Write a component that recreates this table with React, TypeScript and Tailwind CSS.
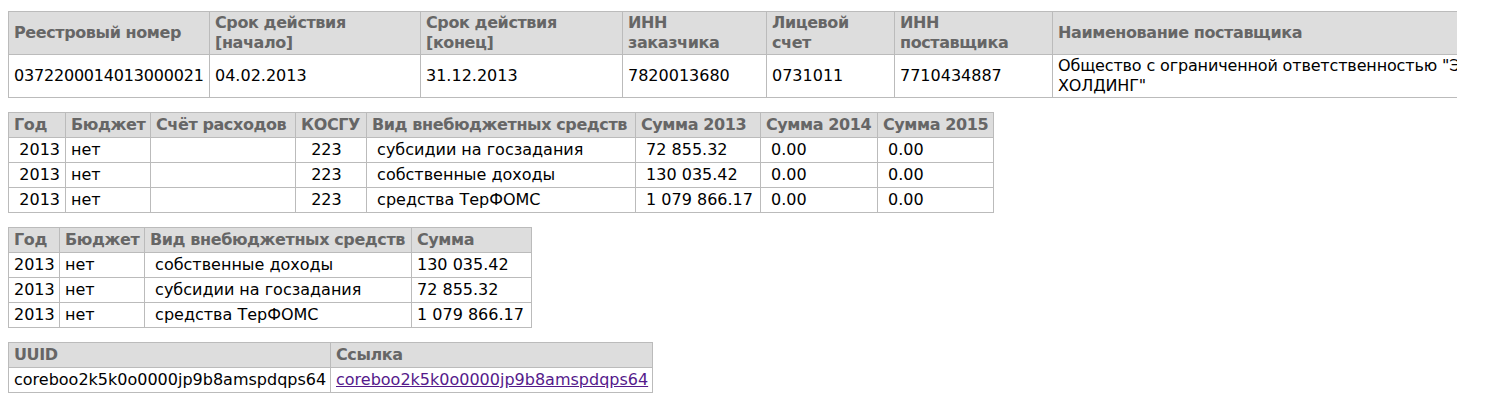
import React from 'react'

const th = 'bg-[#dddddd] text-[#666666] font-bold text-left border border-[#bbbbbb] px-[5px] align-middle tracking-[-0.4px]'
const td = 'border border-[#bbbbbb] px-[5px] align-middle text-black'

const budgetRows = [
  { year: '2013', budget: 'нет', kosgu: '223', kind: 'субсидии на госзадания', s13: '72 855.32', s14: '0.00', s15: '0.00' },
  { year: '2013', budget: 'нет', kosgu: '223', kind: 'собственные доходы', s13: '130 035.42', s14: '0.00', s15: '0.00' },
  { year: '2013', budget: 'нет', kosgu: '223', kind: 'средства ТерФОМС', s13: '1 079 866.17', s14: '0.00', s15: '0.00' },
]

const sumRows = [
  { year: '2013', budget: 'нет', kind: 'собственные доходы', sum: '130 035.42' },
  { year: '2013', budget: 'нет', kind: 'субсидии на госзадания', sum: '72 855.32' },
  { year: '2013', budget: 'нет', kind: 'средства ТерФОМС', sum: '1 079 866.17' },
]

const sp = '\u00a0'

export default function App() {
  return (
    <main
      className="pl-[8px] pt-[11px] text-[16px] leading-[20px] bg-white min-h-[406px]"
      style={{ fontFamily: '"DejaVu Sans", Verdana, sans-serif' }}
    >
      {/* Contract summary, clipped on the right */}
      <div className="w-[1449px] overflow-hidden">
        <table className="border-collapse table-fixed w-[1649px]">
          <colgroup>
            <col className="w-[201px]" />
            <col className="w-[211px]" />
            <col className="w-[202px]" />
            <col className="w-[144px]" />
            <col className="w-[128px]" />
            <col className="w-[158px]" />
            <col className="w-[605px]" />
          </colgroup>
          <thead>
            <tr>
              <th className={`${th} py-px`}>Реестровый номер</th>
              <th className={`${th} py-px`}>Срок действия [начало]</th>
              <th className={`${th} py-px`}>Срок действия [конец]</th>
              <th className={`${th} py-px`}>ИНН заказчика</th>
              <th className={`${th} py-px`}>Лицевой счет</th>
              <th className={`${th} py-px`}>ИНН поставщика</th>
              <th className={`${th} py-px`}>Наименование поставщика</th>
            </tr>
          </thead>
          <tbody>
            <tr>
              <td className={`${td} py-px tracking-[-0.2px]`}>0372200014013000021</td>
              <td className={`${td} py-px`}>04.02.2013</td>
              <td className={`${td} py-px`}>31.12.2013</td>
              <td className={`${td} py-px`}>7820013680</td>
              <td className={`${td} py-px`}>0731011</td>
              <td className={`${td} py-px`}>7710434887</td>
              <td className={`${td} py-px tracking-[-0.15px]`}>
                Общество с ограниченной ответственностью "Энергостройкомплекс ХОЛДИНГ"
              </td>
            </tr>
          </tbody>
        </table>
      </div>

      {/* Budget by years */}
      <table className="border-collapse table-fixed mt-[14px] w-[986px]">
        <colgroup>
          <col className="w-[57px]" />
          <col className="w-[85px]" />
          <col className="w-[145px]" />
          <col className="w-[71px]" />
          <col className="w-[269px]" />
          <col className="w-[125px]" />
          <col className="w-[117px]" />
          <col className="w-[116px]" />
        </colgroup>
        <thead>
          <tr>
            {['Год', 'Бюджет', 'Счёт расходов', 'КОСГУ', 'Вид внебюджетных средств', 'Сумма 2013', 'Сумма 2014', 'Сумма 2015'].map((h) => (
              <th key={h} className={`${th} py-[2px] whitespace-nowrap`}>{h}</th>
            ))}
          </tr>
        </thead>
        <tbody>
          {budgetRows.map((r, i) => (
            <tr key={i}>
              <td className={`${td} py-[2px] text-right whitespace-nowrap`}>{sp + r.year}</td>
              <td className={`${td} py-[2px]`}>{r.budget}</td>
              <td className={`${td} py-[2px]`}></td>
              <td className={`${td} py-[2px] whitespace-pre`}>{sp + sp + r.kosgu}</td>
              <td className={`${td} py-[2px] whitespace-nowrap`}>{sp + r.kind}</td>
              <td className={`${td} py-[2px] whitespace-nowrap`}>{sp + r.s13}</td>
              <td className={`${td} py-[2px] whitespace-nowrap`}>{sp + r.s14}</td>
              <td className={`${td} py-[2px] whitespace-nowrap`}>{sp + r.s15}</td>
            </tr>
          ))}
        </tbody>
      </table>

      {/* Totals by fund kind */}
      <table className="border-collapse table-fixed mt-[14px] w-[524px]">
        <colgroup>
          <col className="w-[51px]" />
          <col className="w-[85px]" />
          <col className="w-[267px]" />
          <col className="w-[120px]" />
        </colgroup>
        <thead>
          <tr>
            {['Год', 'Бюджет', 'Вид внебюджетных средств', 'Сумма'].map((h) => (
              <th key={h} className={`${th} py-[2px] whitespace-nowrap`}>{h}</th>
            ))}
          </tr>
        </thead>
        <tbody>
          {sumRows.map((r, i) => (
            <tr key={i}>
              <td className={`${td} py-[2px]`}>{r.year}</td>
              <td className={`${td} py-[2px]`}>{r.budget}</td>
              <td className={`${td} py-[2px] whitespace-nowrap`}>{sp + r.kind}</td>
              <td className={`${td} py-[2px] whitespace-nowrap`}>{r.sum}</td>
            </tr>
          ))}
        </tbody>
      </table>

      {/* Identifiers */}
      <table className="border-collapse table-fixed mt-[14px] w-[645px]">
        <colgroup>
          <col className="w-[322px]" />
          <col className="w-[322px]" />
        </colgroup>
        <thead>
          <tr>
            <th className={`${th} py-[2px]`}>UUID</th>
            <th className={`${th} py-[2px]`}>Ссылка</th>
          </tr>
        </thead>
        <tbody>
          <tr>
            <td className={`${td} py-[2px]`}>coreboo2k5k0o0000jp9b8amspdqps64</td>
            <td className={`${td} py-[2px]`}>
              <a href="#" className="text-[#551a8b] underline">
                coreboo2k5k0o0000jp9b8amspdqps64
              </a>
            </td>
          </tr>
        </tbody>
      </table>
    </main>
  )
}
